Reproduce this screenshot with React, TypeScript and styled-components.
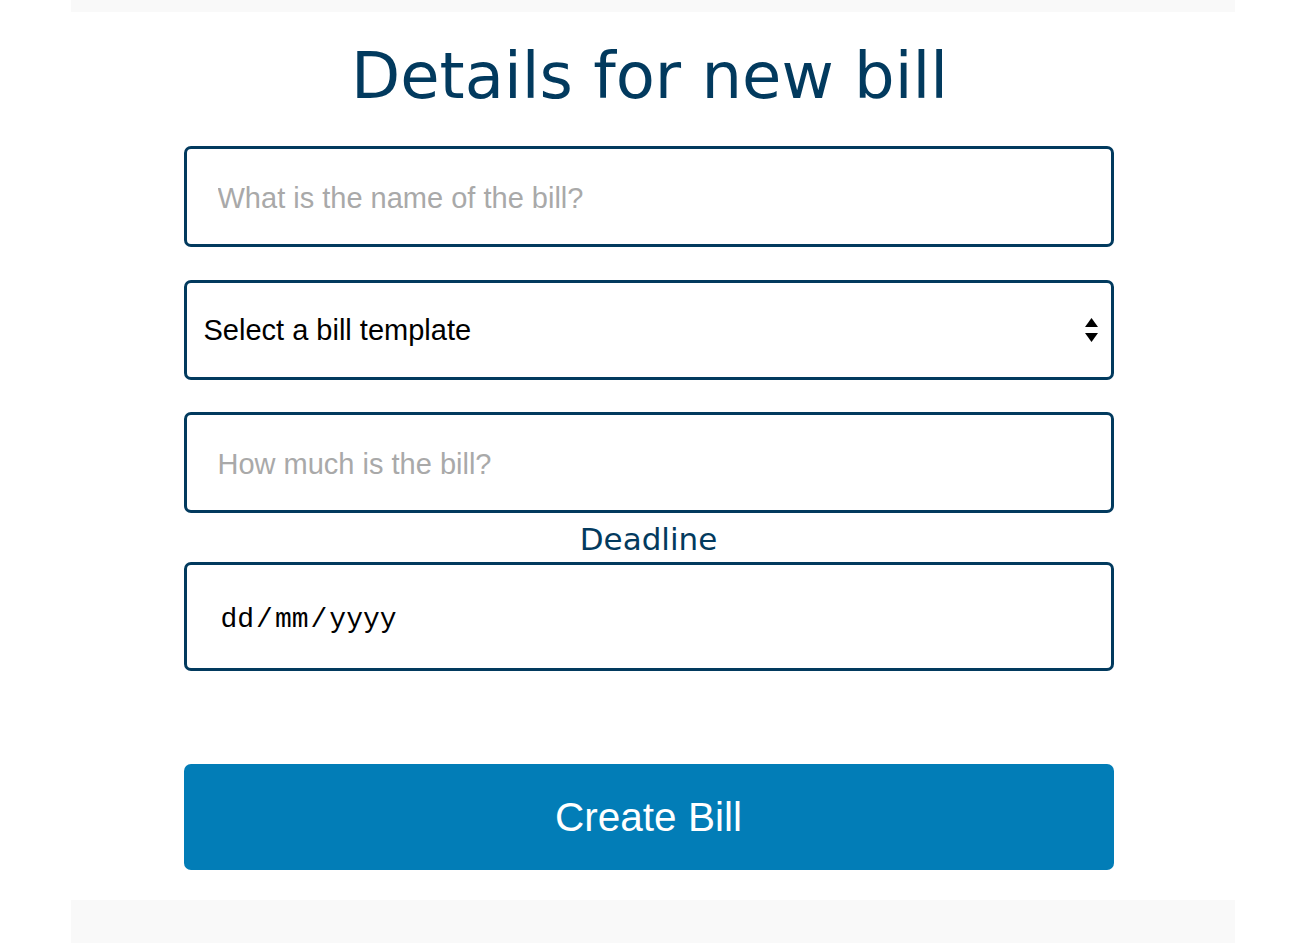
import React from 'react';
import styled, { createGlobalStyle } from 'styled-components';

const GlobalStyle = createGlobalStyle`
  html, body {
    margin: 0;
    padding: 0;
    background: #ffffff;
    font-family: "Liberation Sans", Arial, sans-serif;
  }
`;

const navy = '#023a5e';

const Band = styled.div<{ $height: number }>`
  width: 1164px;
  height: ${({ $height }) => $height}px;
  margin: 0 auto;
  background: #f9f9f9;
`;

const Main = styled.main`
  width: 1164px;
  margin: 0 auto;
  padding: 27px 0 30px;
  box-sizing: border-box;
`;

const Title = styled.h1`
  margin: 0 0 33px;
  padding-left: 114px;
  width: 930px;
  box-sizing: content-box;
  text-align: center;
  font-family: "DejaVu Sans", Verdana, sans-serif;
  font-size: 64px;
  font-weight: 400;
  line-height: 74px;
  color: ${navy};
`;

const Form = styled.form`
  width: 930px;
  margin-left: 113px;
  display: flex;
  flex-direction: column;
`;

const TextInput = styled.input<{ $mb: number }>`
  display: block;
  width: 100%;
  height: 101px;
  box-sizing: border-box;
  margin: 0 0 ${({ $mb }) => $mb}px;
  padding: 3px 31px 0;
  border: 3px solid ${navy};
  border-radius: 7px;
  background: #fff;
  font-family: "Liberation Sans", Arial, sans-serif;
  font-size: 29px;
  color: #000;
  outline: none;

  &::placeholder {
    color: #a9a9a9;
  }
`;

const SelectWrap = styled.div`
  position: relative;
  margin-bottom: 32px;
`;

const Select = styled.select`
  display: block;
  width: 100%;
  height: 100px;
  box-sizing: border-box;
  margin: 0;
  padding: 0 40px 0 17px;
  border: 3px solid ${navy};
  border-radius: 7px;
  background: #fff;
  appearance: none;
  -webkit-appearance: none;
  font-family: "Liberation Sans", Arial, sans-serif;
  font-size: 29px;
  color: #000;
  outline: none;
`;

const Arrows = styled.svg`
  position: absolute;
  right: 16px;
  top: 38px;
  width: 13px;
  height: 24px;
  pointer-events: none;
`;

const Label = styled.label`
  display: block;
  margin: 9px 0 5px;
  text-align: center;
  font-family: "DejaVu Sans", Verdana, sans-serif;
  font-size: 31px;
  line-height: 35px;
  color: ${navy};
`;

const DateBox = styled.div`
  display: flex;
  align-items: center;
  height: 109px;
  box-sizing: border-box;
  padding: 6px 34px 0;
  border: 3px solid ${navy};
  border-radius: 7px;
  font-family: "Liberation Mono", "Courier New", monospace;
  font-size: 28px;
  color: #000;
`;

const Sep = styled.span`
  margin: 0 2px;
`;

const Button = styled.button`
  margin-top: 93px;
  height: 106px;
  width: 100%;
  border: none;
  border-radius: 7px;
  background: #027db7;
  color: #fff;
  font-family: "Liberation Sans", Arial, sans-serif;
  font-size: 40.5px;
  cursor: pointer;
`;

export default function App() {
  return (
    <>
      <GlobalStyle />
      <Band $height={12} />
      <Main>
        <Title>Details for new bill</Title>
        <Form onSubmit={e => e.preventDefault()}>
          <TextInput $mb={33} type="text" placeholder="What is the name of the bill?" />
          <SelectWrap>
            <Select defaultValue="">
              <option value="">Select a bill template</option>
            </Select>
            <Arrows viewBox="0 0 13 24">
              <path d="M6.5 0 L13 9 L0 9 Z" fill="#000" />
              <path d="M0 15 L13 15 L6.5 24 Z" fill="#000" />
            </Arrows>
          </SelectWrap>
          <TextInput $mb={0} type="text" placeholder="How much is the bill?" />
          <Label htmlFor="deadline">Deadline</Label>
          <DateBox id="deadline">
            <span>dd</span>
            <Sep>/</Sep>
            <span>mm</span>
            <Sep>/</Sep>
            <span>yyyy</span>
          </DateBox>
          <Button type="submit">Create Bill</Button>
        </Form>
      </Main>
      <Band $height={43} />
    </>
  );
}
